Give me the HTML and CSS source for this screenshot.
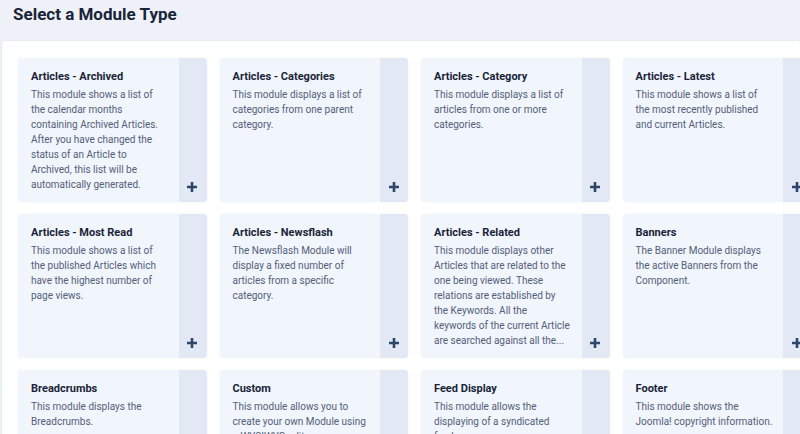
FILE: index.html
```html
<!DOCTYPE html>
<html lang="en">
<head>
  <meta charset="UTF-8" />
  <meta name="viewport" content="width=device-width, initial-scale=1.0" />
  <title>Select a Module Type</title>
  <link rel="stylesheet" href="styles.css">
</head>
<body>
  <h1 class="page-title">Select a Module Type</h1>

  <main class="panel">
    <div class="module-grid">
      <a class="module" href="#">
        <div class="module-body">
          <h3>Articles - Archived</h3>
          <p>This module shows a list of the calendar months containing Archived Articles. After you have changed the status of an Article to Archived, this list will be automatically generated.</p>
        </div>
        <span class="module-add"><svg viewBox="0 0 12 12"><path d="M6 1v10M1 6h10"/></svg></span>
      </a>
      <a class="module" href="#">
        <div class="module-body">
          <h3>Articles - Categories</h3>
          <p>This module displays a list of categories from one parent category.</p>
        </div>
        <span class="module-add"><svg viewBox="0 0 12 12"><path d="M6 1v10M1 6h10"/></svg></span>
      </a>
      <a class="module" href="#">
        <div class="module-body">
          <h3>Articles - Category</h3>
          <p>This module displays a list of articles from one or more categories.</p>
        </div>
        <span class="module-add"><svg viewBox="0 0 12 12"><path d="M6 1v10M1 6h10"/></svg></span>
      </a>
      <a class="module" href="#">
        <div class="module-body">
          <h3>Articles - Latest</h3>
          <p>This module shows a list of the most recently published and current Articles.</p>
        </div>
        <span class="module-add"><svg viewBox="0 0 12 12"><path d="M6 1v10M1 6h10"/></svg></span>
      </a>

      <a class="module" href="#">
        <div class="module-body">
          <h3>Articles - Most Read</h3>
          <p>This module shows a list of the published Articles which have the highest number of page views.</p>
        </div>
        <span class="module-add"><svg viewBox="0 0 12 12"><path d="M6 1v10M1 6h10"/></svg></span>
      </a>
      <a class="module" href="#">
        <div class="module-body">
          <h3>Articles - Newsflash</h3>
          <p>The Newsflash Module will display a fixed number of articles from a specific category.</p>
        </div>
        <span class="module-add"><svg viewBox="0 0 12 12"><path d="M6 1v10M1 6h10"/></svg></span>
      </a>
      <a class="module" href="#">
        <div class="module-body">
          <h3>Articles - Related</h3>
          <p>This module displays other Articles that are related to the one being viewed. These relations are established by the Keywords. All the keywords of the current Article are searched against all the...</p>
        </div>
        <span class="module-add"><svg viewBox="0 0 12 12"><path d="M6 1v10M1 6h10"/></svg></span>
      </a>
      <a class="module" href="#">
        <div class="module-body">
          <h3>Banners</h3>
          <p>The Banner Module displays the active Banners from the Component.</p>
        </div>
        <span class="module-add"><svg viewBox="0 0 12 12"><path d="M6 1v10M1 6h10"/></svg></span>
      </a>

      <a class="module" href="#">
        <div class="module-body">
          <h3>Breadcrumbs</h3>
          <p>This module displays the Breadcrumbs.</p>
        </div>
        <span class="module-add"><svg viewBox="0 0 12 12"><path d="M6 1v10M1 6h10"/></svg></span>
      </a>
      <a class="module" href="#">
        <div class="module-body">
          <h3>Custom</h3>
          <p>This module allows you to create your own Module using a WYSIWYG editor.</p>
        </div>
        <span class="module-add"><svg viewBox="0 0 12 12"><path d="M6 1v10M1 6h10"/></svg></span>
      </a>
      <a class="module" href="#">
        <div class="module-body">
          <h3>Feed Display</h3>
          <p>This module allows the displaying of a syndicated feed.</p>
        </div>
        <span class="module-add"><svg viewBox="0 0 12 12"><path d="M6 1v10M1 6h10"/></svg></span>
      </a>
      <a class="module" href="#">
        <div class="module-body">
          <h3>Footer</h3>
          <p>This module shows the Joomla! copyright information.</p>
        </div>
        <span class="module-add"><svg viewBox="0 0 12 12"><path d="M6 1v10M1 6h10"/></svg></span>
      </a>
    </div>
  </main>
</body>
</html>
```

FILE: styles.css
```css
html, body {
  height: 100%;
  overflow: hidden;
}
body {
  margin: 0;
  font-family: Roboto, "Noto Sans", sans-serif;
  background: #eef2f8;
  color: #1c2a44;
}
.page-title {
  margin: 0;
  padding: 3px 13px 0;
  height: 36px;
  box-sizing: border-box;
  font-size: 17px;
  line-height: 22px;
  font-weight: 700;
  color: #1a2438;
}
.panel {
  margin: 5px 0 0 2px;
  padding: 17px 16px;
  background: #fff;
  border-radius: 3px;
  box-shadow: 0 0 3px rgba(30, 50, 90, 0.08);
  min-height: 100%;
}
.module-grid {
  display: grid;
  grid-template-columns: repeat(4, 188.5px);
  grid-auto-rows: 144px;
  column-gap: 13px;
  row-gap: 12px;
}
.module {
  display: flex;
  background: #f1f5fc;
  border-radius: 4px;
  overflow: hidden;
  text-decoration: none;
  box-shadow: 0 0 2px rgba(30, 50, 90, 0.08);
}
.module-body {
  flex: 1;
  padding: 12px 10px 0 13px;
}
.module h3 {
  margin: 0 0 3px;
  font-size: 11px;
  line-height: 14px;
  font-weight: 700;
  color: #1a2438;
}
.module p {
  margin: 0;
  font-size: 10px;
  line-height: 15px;
  color: #536079;
}
.module-add {
  width: 28px;
  flex: none;
  background: #e2e9f4;
  display: flex;
  align-items: flex-end;
  justify-content: center;
  padding: 0 1px 9px 0;
  box-sizing: border-box;
}
.module-add svg {
  width: 12px;
  height: 12px;
  stroke: #2e466b;
  stroke-width: 2.6;
  fill: none;
}
```
